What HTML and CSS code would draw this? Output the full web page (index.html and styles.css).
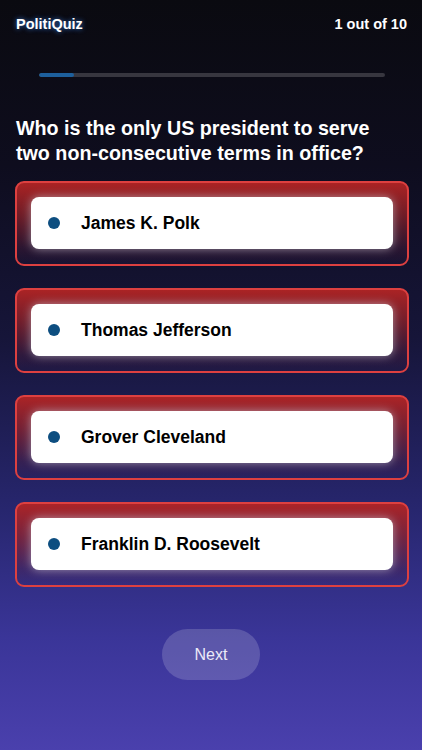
FILE: index.html
```html
<!DOCTYPE html>
<html lang="en">
<head>
    <meta charset="UTF-8">
    <meta name="viewport" content="width=device-width, initial-scale=1.0">
    <title>PolitiQuiz</title>
    <link rel="stylesheet" href="styles.css">
</head>
<body>
    <div class="screen">
        <header class="top-bar">
            <span class="brand">PolitiQuiz</span>
            <span class="counter">1 out of 10</span>
        </header>

        <div class="progress">
            <div class="progress-fill" style="width: 10%"></div>
        </div>

        <h1 class="question">Who is the only US president to serve two non-consecutive terms in office?</h1>

        <div class="options">
            <div class="option">
                <div class="option-card">
                    <span class="dot"></span>
                    <span class="option-text">James K. Polk</span>
                </div>
            </div>
            <div class="option">
                <div class="option-card">
                    <span class="dot"></span>
                    <span class="option-text">Thomas Jefferson</span>
                </div>
            </div>
            <div class="option">
                <div class="option-card">
                    <span class="dot"></span>
                    <span class="option-text">Grover Cleveland</span>
                </div>
            </div>
            <div class="option">
                <div class="option-card">
                    <span class="dot"></span>
                    <span class="option-text">Franklin D. Roosevelt</span>
                </div>
            </div>
        </div>

        <div class="actions">
            <button class="next-btn">Next</button>
        </div>
    </div>
</body>
</html>
```

FILE: styles.css
```css
/* PolitiQuiz question screen */
html, body {
    margin: 0;
    padding: 0;
}

body {
    font-family: 'Liberation Sans', Arial, sans-serif;
    color: #fff;
    min-height: 750px;
    background: linear-gradient(180deg, #0a0a10 0%, #0e0d1e 22%, #161539 45%, #27266e 68%, #3a3598 85%, #4a40ad 100%);
}

.screen {
    display: flex;
    flex-direction: column;
    min-height: 750px;
}

.top-bar {
    display: flex;
    justify-content: space-between;
    align-items: center;
    padding: 14px 15px 0 16px;
    line-height: 20px;
    font-size: 14.5px;
    font-weight: bold;
}

.brand {
    text-shadow: 0 0 5px rgba(60, 140, 255, 0.8);
}

.progress {
    margin: 39px 37px 0 39px;
    height: 4px;
    border-radius: 2px;
    background: #37363f;
    overflow: hidden;
}

.progress-fill {
    height: 100%;
    border-radius: 2px;
    background: #1d5f9c;
}

.question {
    margin: 39px 16px 0;
    font-size: 19.7px;
    line-height: 25px;
    font-weight: bold;
}

.options {
    display: flex;
    flex-direction: column;
    gap: 22px;
    margin: 15px 13px 0 15px;
}

.option {
    border: 2px solid #dd4040;
    border-radius: 9px;
    padding: 14px 14px 15px;
    background: linear-gradient(180deg, rgba(178, 36, 36, 0.95) 0%, rgba(150, 34, 40, 0.7) 40%, rgba(90, 30, 60, 0.35) 80%, rgba(60, 30, 80, 0.15) 100%);
}

.option-card {
    display: flex;
    align-items: center;
    height: 52px;
    padding-left: 17px;
    border-radius: 8px;
    background: #fff;
    box-shadow: 0 0 10px rgba(215, 215, 225, 0.6);
}

.dot {
    width: 12px;
    height: 12px;
    border-radius: 50%;
    background: #0d4e80;
    margin-right: 21px;
}

.option-text {
    color: #000;
    font-size: 17.5px;
    font-weight: bold;
}

.actions {
    display: flex;
    justify-content: center;
    margin-top: 42px;
}

.next-btn {
    width: 98px;
    height: 51px;
    border: none;
    border-radius: 26px;
    background: rgba(255, 255, 255, 0.17);
    color: #eceaf8;
    font-family: 'Liberation Sans', Arial, sans-serif;
    font-size: 16px;
}
```
